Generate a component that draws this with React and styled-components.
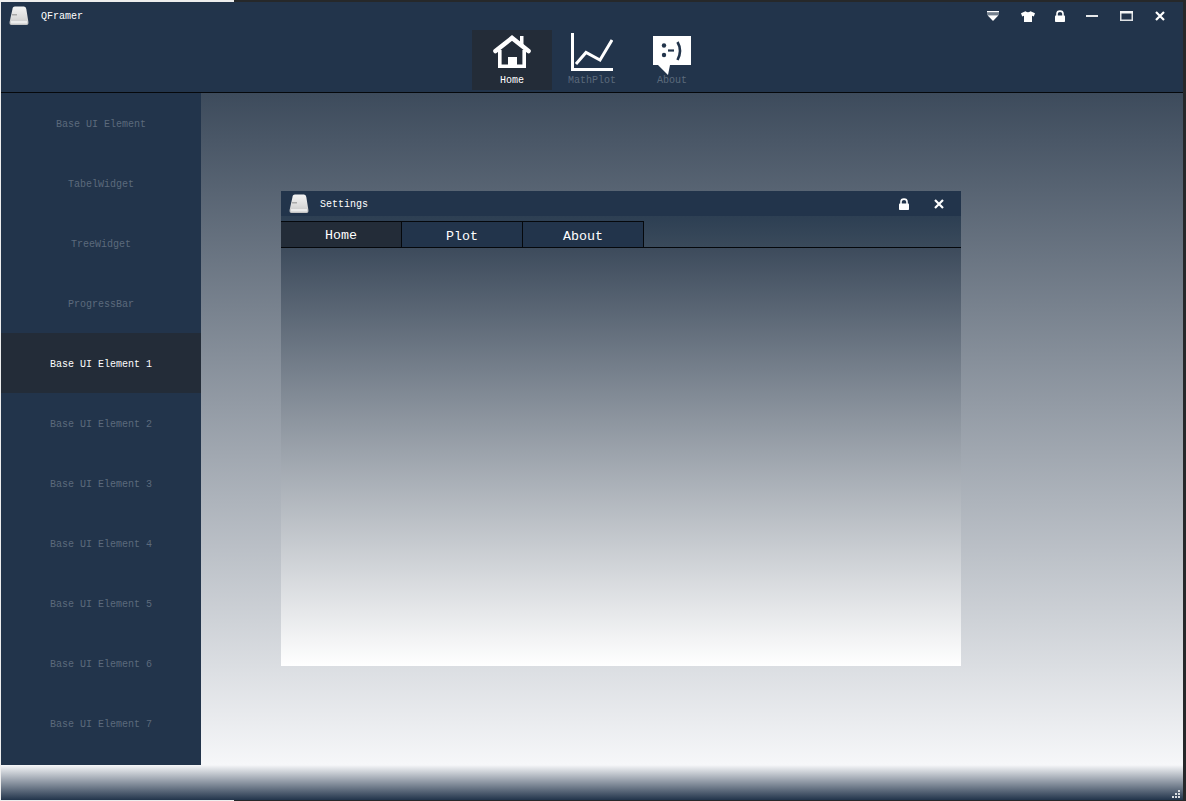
import React from 'react'
import styled, { createGlobalStyle } from 'styled-components'

const GlobalStyle = createGlobalStyle`
html, body {
  margin: 0;
  padding: 0;
  height: 100%;
  overflow: hidden;
  background: linear-gradient(90deg, #eeeeee 0, #eeeeee 234px, #26282a 234px);
}
* {
  box-sizing: border-box;
}
`

const NAVY = '#22344b'
const ACTIVE = '#232c38'
const MUTED = '#5c6a7c'

const menuItems = [
  'Base UI Element',
  'TabelWidget',
  'TreeWidget',
  'ProgressBar',
  'Base UI Element 1',
  'Base UI Element 2',
  'Base UI Element 3',
  'Base UI Element 4',
  'Base UI Element 5',
  'Base UI Element 6',
  'Base UI Element 7',
]

function KeyIcon() {
  return (
    <svg width="20" height="20" viewBox="0 0 20 20">
      <defs>
        <linearGradient id="keycap" x1="0" y1="0" x2="0" y2="1">
          <stop offset="0" stopColor="#f4f4f4" />
          <stop offset="0.6" stopColor="#dcdcdc" />
          <stop offset="1" stopColor="#c4c4c4" />
        </linearGradient>
      </defs>
      <path d="M3.5 3Q3.5 0.5 6 0.5H15Q17 0.5 17.3 3L19.4 16Q19.8 19 17.5 19H2.5Q0.2 19 0.6 16Z" fill="url(#keycap)" />
      <path d="M3 8h5v1.5H3z" fill="#a9a9a9" />
      <path d="M2 15h16v2.5H2z" fill="#ececec" />
    </svg>
  )
}

function FilterIcon() {
  return (
    <svg width="12" height="10" viewBox="0 0 12 10" fill="#fff">
      <path d="M0 0h12v1.5H0z" />
      <path d="M0 2.5h12v1H0z" fill="#c9ced4" />
      <path d="M0.5 4.2h11L6 10z" />
    </svg>
  )
}

function ShirtIcon() {
  return (
    <svg width="14" height="11" viewBox="0 0 14 11" fill="#fff">
      <path d="M4.5 0.2L0 2.2 1.2 5.4 3 4.8V11H11V4.8L12.8 5.4 14 2.2 9.5 0.2Q7 2.4 4.5 0.2Z" />
    </svg>
  )
}

function LockIcon() {
  return (
    <svg width="12" height="12" viewBox="0 0 12 12">
      <path d="M3 6V3.7C3 0.3 9 0.3 9 3.7V6" fill="none" stroke="#fff" strokeWidth="1.6" />
      <rect x="1" y="5.5" width="10" height="6.5" rx="0.8" fill="#fff" />
    </svg>
  )
}

function MinIcon() {
  return (
    <svg width="12" height="2" viewBox="0 0 12 2">
      <path d="M0 0h12v2H0z" fill="#e6e8ea" />
    </svg>
  )
}

function MaxIcon() {
  return (
    <svg width="13" height="10" viewBox="0 0 13 10" fill="none">
      <path d="M0.75 0.75h11.5v8.5H0.75z" stroke="#dfe2e5" strokeWidth="1.5" />
      <path d="M0 0h13v2.5H0z" fill="#f3f4f5" />
    </svg>
  )
}

function CloseIcon() {
  return (
    <svg width="10" height="10" viewBox="0 0 10 10">
      <path d="M1 1L9 9M9 1L1 9" stroke="#fff" strokeWidth="2.2" />
    </svg>
  )
}

function HomeIcon() {
  return (
    <svg width="40" height="36" viewBox="0 0 40 36" fill="none">
      <path d="M28 1h3.5v10H28z" fill="#fff" />
      <path d="M3.5 16L20 3L36.5 16" stroke="#fff" strokeWidth="4.6" strokeLinecap="round" />
      <path d="M7.8 15V31.2H32.2V15" stroke="#fff" strokeWidth="3.6" />
      <path d="M16 22h9v11h-9z" fill="#fff" />
    </svg>
  )
}

function PlotIcon() {
  return (
    <svg width="42" height="38" viewBox="0 0 42 38" fill="none">
      <path d="M0 0h3v38H0zM0 35h42v3H0z" fill="#fff" />
      <path d="M5 31L15 19.5L29 27L41 7" stroke="#fff" strokeWidth="3" />
    </svg>
  )
}

function FaceIcon() {
  return (
    <svg width="38" height="39" viewBox="0 0 38 39" fill="none">
      <path d="M0 0H38V29H17L15 39L5 29H0Z" fill="#fff" />
      <circle cx="11" cy="9.5" r="2.2" fill={NAVY} />
      <circle cx="11" cy="19" r="2.2" fill={NAVY} />
      <path d="M15 14.5h6" stroke={NAVY} strokeWidth="2.2" />
      <path d="M24.5 6Q29.5 14.5 24.5 24" stroke={NAVY} strokeWidth="2.6" />
    </svg>
  )
}

function GripIcon() {
  return (
    <svg width="8" height="8" viewBox="0 0 8 8" fill="#d9dde1">
      <path d="M6 0h2v2H6zM3 3h2v2H3zM6 3h2v2H6zM0 6h2v2H0zM3 6h2v2H3zM6 6h2v2H6z" />
    </svg>
  )
}

export default function App() {
  return (
    <>
      <GlobalStyle />
      <Window>
        <Header>
          <TitleBar>
            <LogoSlot><KeyIcon /></LogoSlot>
            <AppTitle>QFramer</AppTitle>
            <Spacer />
            <WinButton $w={35}><FilterIcon /></WinButton>
            <WinButton $w={35}><ShirtIcon /></WinButton>
            <WinButton $w={29}><LockIcon /></WinButton>
            <WinButton $w={35}><MinIcon /></WinButton>
            <WinButton $w={34}><MaxIcon /></WinButton>
            <WinButton $w={34}><CloseIcon /></WinButton>
            <TitleEnd />
          </TitleBar>
          <Nav>
            <NavItem $active>
              <NavIconSlot $top={5}><HomeIcon /></NavIconSlot>
              <NavLabel $active>Home</NavLabel>
            </NavItem>
            <NavItem>
              <NavIconSlot $top={3}><PlotIcon /></NavIconSlot>
              <NavLabel>MathPlot</NavLabel>
            </NavItem>
            <NavItem>
              <NavIconSlot $top={6}><FaceIcon /></NavIconSlot>
              <NavLabel>About</NavLabel>
            </NavItem>
          </Nav>
        </Header>

        <Middle>
          <Sidebar>
            {menuItems.map((item, i) => (
              <MenuItem key={i} $active={i === 4}>{item}</MenuItem>
            ))}
          </Sidebar>
          <Content>
            <Dialog>
              <DialogTitle>
                <DialogLogo><KeyIcon /></DialogLogo>
                <DialogName>Settings</DialogName>
                <Spacer />
                <WinButton $w={35}><LockIcon /></WinButton>
                <WinButton $w={35}><CloseIcon /></WinButton>
                <DialogEnd />
              </DialogTitle>
              <TabStrip>
                <Tab $active>Home</Tab>
                <Tab>Plot</Tab>
                <Tab>About</Tab>
              </TabStrip>
              <DialogBody />
            </Dialog>
          </Content>
        </Middle>

        <Footer>
          <GripIcon />
        </Footer>
      </Window>
    </>
  )
}

const Window = styled.div`
margin: 2px 3px 0 1px;
height: 798px;
display: flex;
flex-direction: column;
font-family: "Liberation Mono", "DejaVu Sans Mono", monospace;
`

const Header = styled.div`
height: 91px;
flex: none;
background: ${NAVY};
border-bottom: 1px solid #05080c;
`

const TitleBar = styled.div`
height: 28px;
display: flex;
align-items: center;
`

const LogoSlot = styled.div`
width: 40px;
padding-left: 8px;
display: flex;
align-items: center;
`

const AppTitle = styled.div`
color: #fff;
font-size: 10px;
`

const Spacer = styled.div`
flex: 1;
`

const WinButton = styled.div`
width: ${props => props.$w}px;
height: 25px;
display: flex;
align-items: center;
justify-content: center;
`

const TitleEnd = styled.div`
width: 6px;
`

const Nav = styled.div`
height: 60px;
display: flex;
justify-content: center;
`

const NavItem = styled.div`
width: 80px;
height: 60px;
display: flex;
flex-direction: column;
align-items: center;
background: ${props => props.$active ? ACTIVE : 'transparent'};
`

const NavIconSlot = styled.div`
height: 44px;
flex: none;
padding-top: ${props => props.$top}px;
display: flex;
align-items: flex-start;
justify-content: center;
`

const NavLabel = styled.div`
font-size: 10px;
line-height: 12px;
padding-top: 1px;
color: ${props => props.$active ? '#fff' : MUTED};
`

const Middle = styled.div`
flex: 1;
min-height: 0;
display: flex;
`

const Sidebar = styled.div`
width: 200px;
flex: none;
background: ${NAVY};
`

const MenuItem = styled.div`
height: 60px;
display: flex;
align-items: center;
justify-content: center;
padding-top: 2px;
font-size: 10px;
color: ${props => props.$active ? '#fff' : MUTED};
background: ${props => props.$active ? ACTIVE : 'transparent'};
`

const Content = styled.div`
flex: 1;
padding: 98px 0 0 80px;
background: linear-gradient(180deg, #3d4b5c 0%, #f6f7f9 100%);
`

const Dialog = styled.div`
width: 680px;
height: 475px;
display: flex;
flex-direction: column;
`

const DialogTitle = styled.div`
height: 25px;
flex: none;
display: flex;
align-items: center;
background: ${NAVY};
`

const DialogLogo = styled.div`
width: 39px;
padding-left: 8px;
display: flex;
align-items: center;
`

const DialogName = styled.div`
color: #fff;
font-size: 10px;
padding-top: 2px;
`

const DialogEnd = styled.div`
width: 5px;
`

const TabStrip = styled.div`
height: 32px;
flex: none;
display: flex;
align-items: flex-end;
padding-top: 5px;
background: linear-gradient(180deg, #2d3f53 0%, #3a4a5b 100%);
border-bottom: 1px solid #05080c;
`

const Tab = styled.div`
width: 121px;
height: 26px;
display: flex;
align-items: center;
justify-content: center;
padding-top: ${props => props.$active ? 2 : 4}px;
font-size: 13.33px;
color: #fff;
background: ${props => props.$active ? ACTIVE : NAVY};
border-top: 1px solid #05080c;
border-right: 1px solid #05080c;
`

const DialogBody = styled.div`
flex: 1;
background: linear-gradient(180deg, #3d4b5c 0%, #ffffff 100%);
`

const Footer = styled.div`
height: 35px;
flex: none;
display: flex;
align-items: flex-end;
justify-content: flex-end;
padding: 0 3px 2px 0;
background: linear-gradient(180deg, #f6f7f9 0%, #22344b 100%);
`
